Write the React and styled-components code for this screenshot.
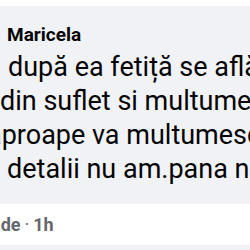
import React from 'react';
import styled, {createGlobalStyle} from 'styled-components';

const Global = createGlobalStyle`
  html, body {
    margin: 0;
    padding: 0;
    background: #FFFFFF;
    overflow: hidden;
  }
  #root {
    width: 250px;
    height: 250px;
    overflow: hidden;
  }
`

const Page = styled.div`
  padding-top: 6px;
  font-family: Roboto, "Noto Sans", sans-serif;
`

const Bubble = styled.div`
  background-color: #F0F2F5;
  height: 198px;
  box-sizing: border-box;
  padding-top: 14px;
  overflow: hidden;
`

const Name = styled.div`
  font-size: 19px;
  font-weight: 700;
  line-height: 30px;
  color: #050505;
  white-space: nowrap;
  margin-left: ${p => p.shift}px;
`

const Line = styled.div`
  font-size: 27px;
  line-height: 34px;
  color: #050505;
  white-space: nowrap;
  margin-left: ${p => p.shift}px;
`

const Meta = styled.div`
  height: 41px;
  display: flex;
  align-items: center;
  font-size: 18px;
  font-weight: 700;
  color: #65676B;
  white-space: nowrap;
  margin-left: ${p => p.shift}px;
  & > span {
    margin: 0 4px;
    font-weight: 400;
  }
`

const NextBubble = styled.div`
  background-color: #F0F2F5;
  height: 40px;
`

const App = () => {
    return (
        <Page>
            <Global/>
            <Bubble>
                <Name shift={7}>Maricela</Name>
                <Line shift={8}>după ea fetiță se află</Line>
                <Line shift={0}>din suflet si multumesc</Line>
                <Line shift={-13}>aproape va multumesc</Line>
                <Line shift={7}>detalii nu am.pana nu</Line>
            </Bubble>
            <Meta shift={-60}>Răspunde<span>·</span>1h</Meta>
            <NextBubble/>
        </Page>
    );
};

export default App;
